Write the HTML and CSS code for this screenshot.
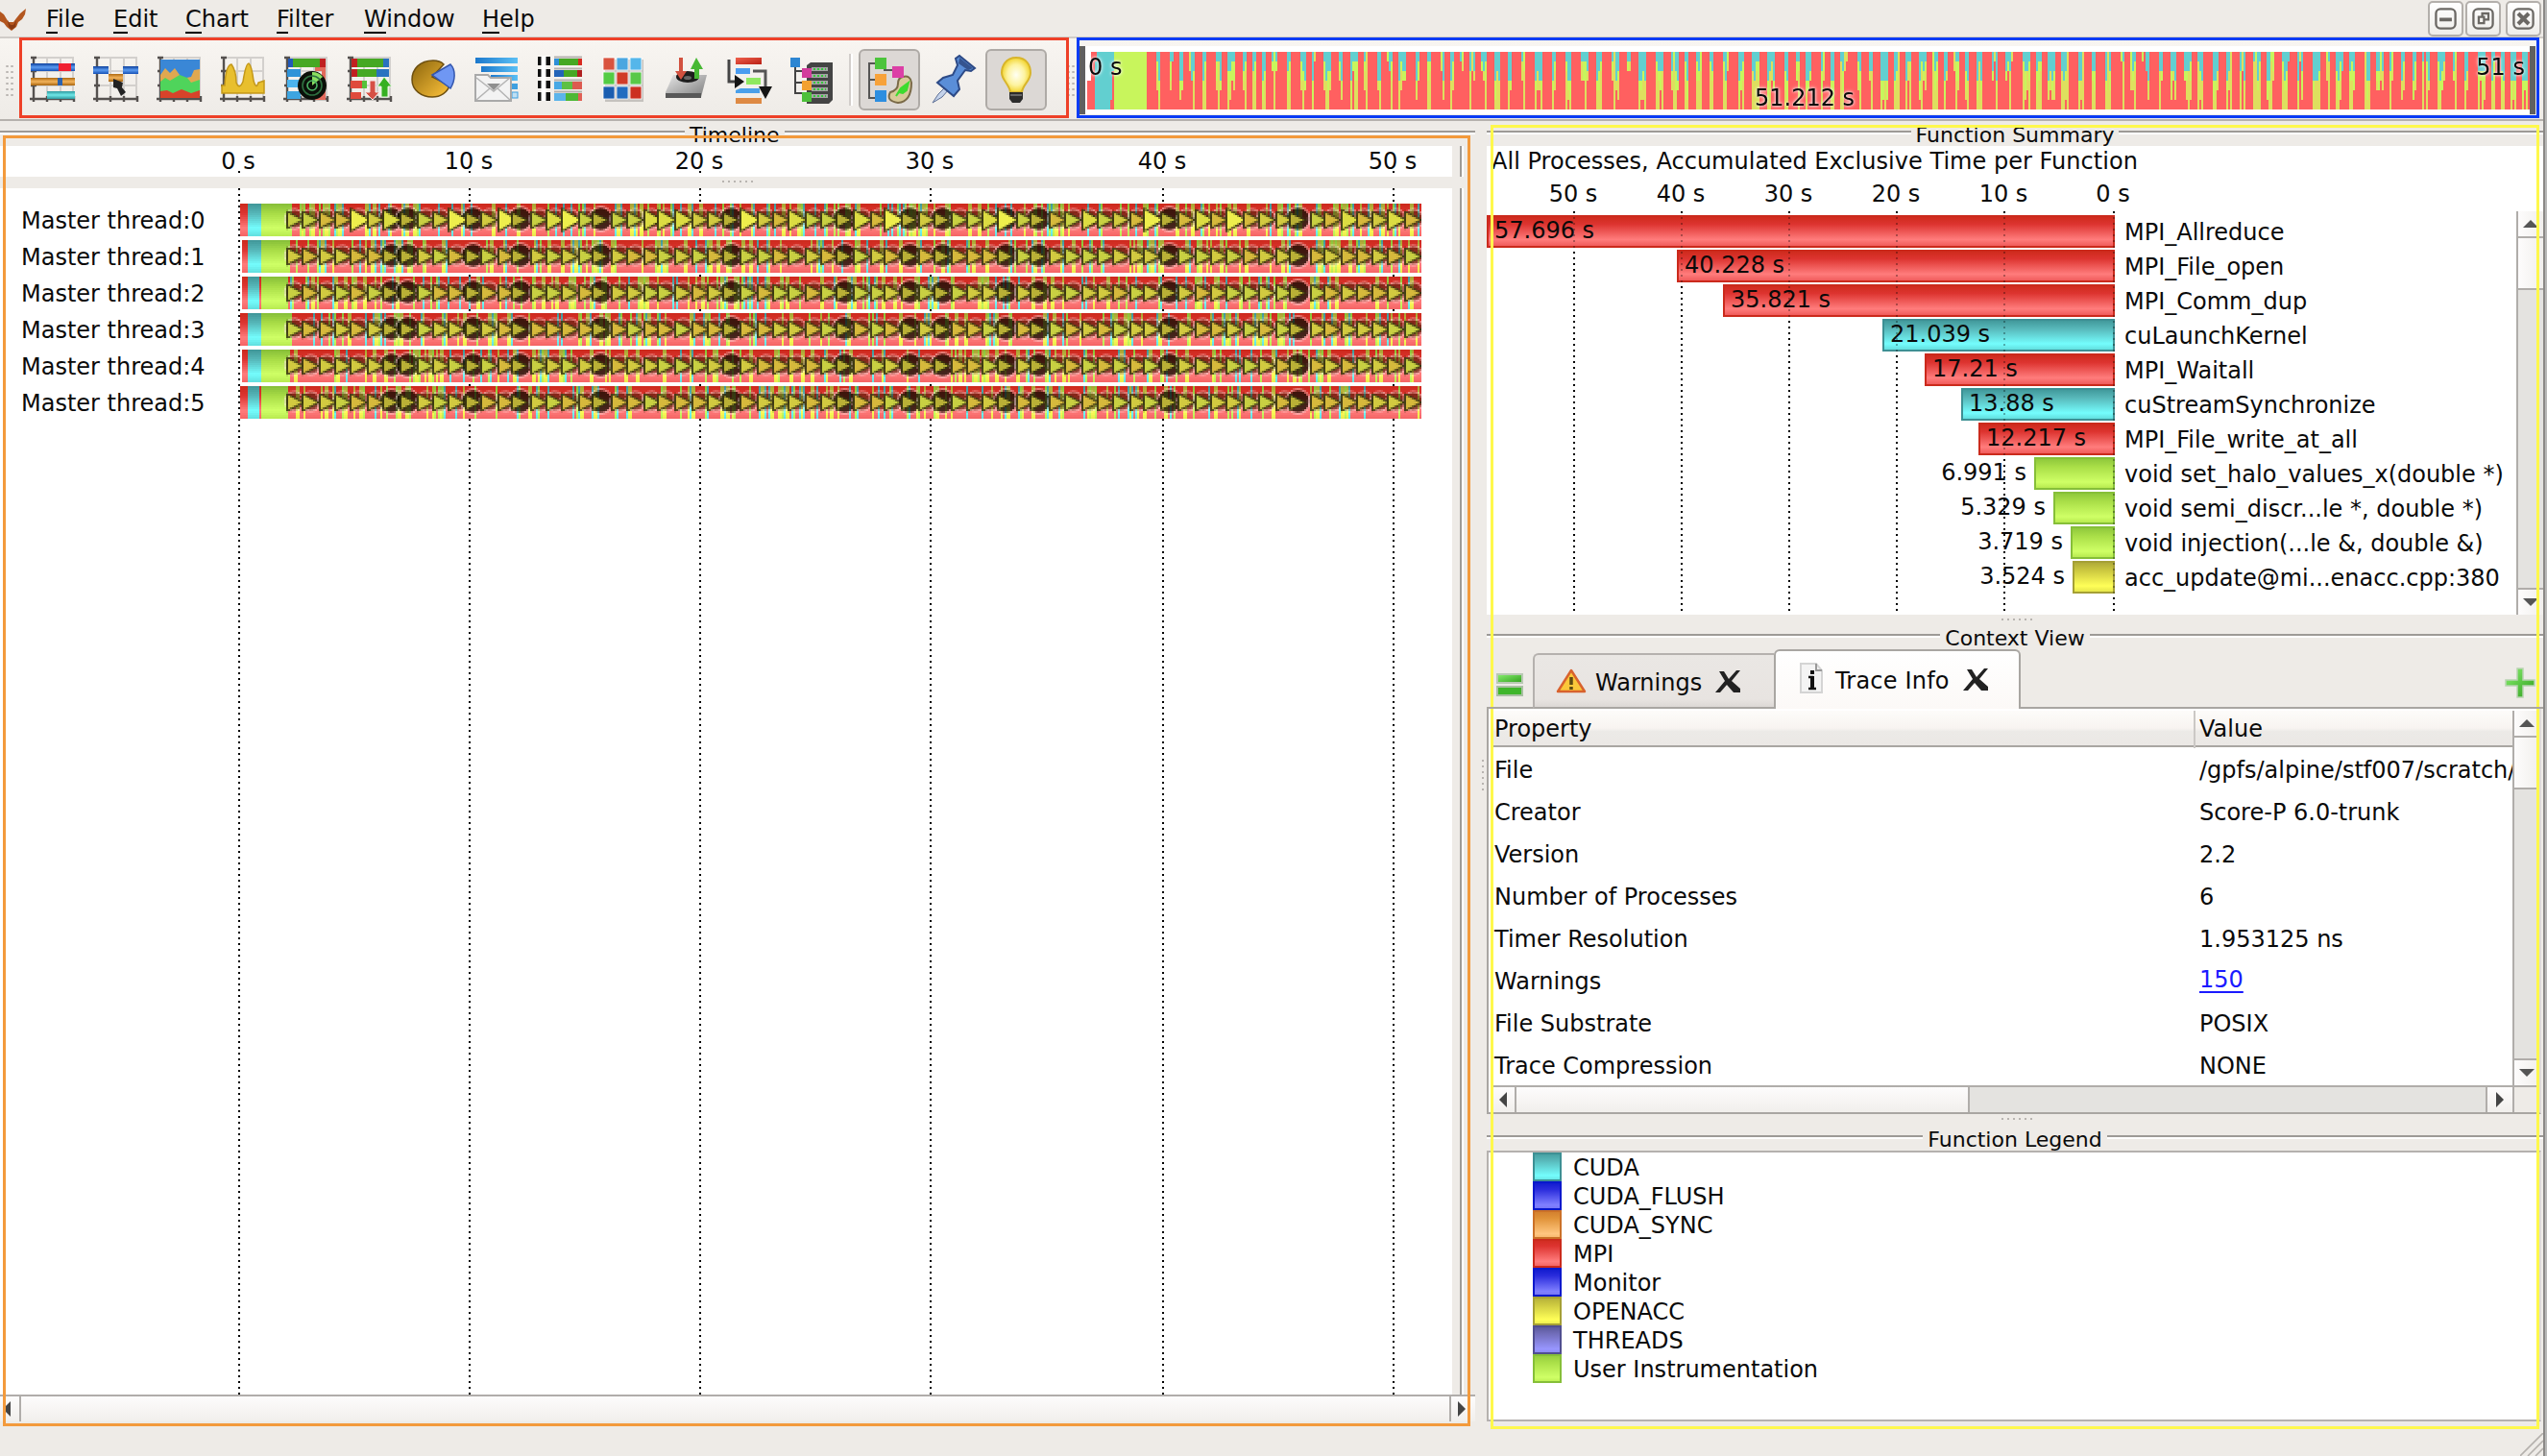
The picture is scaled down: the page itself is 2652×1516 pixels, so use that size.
FILE: index.html
```html
<!DOCTYPE html>
<html lang="en">
<head>
<meta charset="utf-8">
<title>Trace View</title>
<link rel="stylesheet" href="styles.css">
</head>
<body>
<svg class="defs" aria-hidden="true">
  <defs>
    <linearGradient id="gBlue" x1="0" y1="0" x2="0" y2="1"><stop offset="0" stop-color="#0c3f9c"/><stop offset=".5" stop-color="#5b9bf0"/><stop offset="1" stop-color="#1550b5"/></linearGradient>
    <linearGradient id="gSky" x1="0" y1="0" x2="1" y2="0"><stop offset="0" stop-color="#1b78cc"/><stop offset="1" stop-color="#5cc0f5"/></linearGradient>
    <linearGradient id="gOr" x1="0" y1="0" x2="0" y2="1"><stop offset="0" stop-color="#b06a10"/><stop offset=".5" stop-color="#f3b45c"/><stop offset="1" stop-color="#a8640e"/></linearGradient>
    <linearGradient id="gGold" x1="0" y1="0" x2="1" y2="1"><stop offset="0" stop-color="#8a640c"/><stop offset="1" stop-color="#ffc43c"/></linearGradient>
    <linearGradient id="gTeal" x1="0" y1="0" x2="0" y2="1"><stop offset="0" stop-color="#2f9aa0"/><stop offset=".5" stop-color="#70e8e8"/><stop offset="1" stop-color="#2f9aa0"/></linearGradient>
    <linearGradient id="gGreen" x1="0" y1="0" x2="1" y2="1"><stop offset="0" stop-color="#8af070"/><stop offset="1" stop-color="#2f9e1c"/></linearGradient>
    <linearGradient id="gRed" x1="0" y1="0" x2="1" y2="1"><stop offset="0" stop-color="#f0604c"/><stop offset="1" stop-color="#b81f14"/></linearGradient>
    <linearGradient id="gGrey" x1="0" y1="0" x2="1" y2="1"><stop offset="0" stop-color="#e8e8e8"/><stop offset="1" stop-color="#7b7b7b"/></linearGradient>
    <radialGradient id="gBulb"><stop offset="0" stop-color="#fffff4"/><stop offset=".6" stop-color="#fdf3a0"/><stop offset="1" stop-color="#f2d532"/></radialGradient>
    <symbol id="axes" viewBox="0 0 48 48">
      <path d="M4 2H46M4 16H46M4 31H46M18 2V45M32 2V45M45 2V45" stroke="#d3d0cd" stroke-width="2" fill="none"/>
      <path d="M4 1V48M0 45H47M1 2H7M1 16H7M1 31H7M18 42V48M32 42V48M46 42V48" stroke="#55514f" stroke-width="2.4" fill="none"/>
    </symbol>
  </defs>
</svg>

<header class="menubar">
  <svg class="logo" viewBox="0 0 28 24"><path d="M0 4 4 7 7 12 9 15 14 15 17 11 21 6 27 1 26 7 23 12 19 15 17 20 12 24 7 20 4 16 0 14Z" fill="#b3561f"/><path d="M8 13 11 18 14 18 17 13 16 20 12 23 9 20Z" fill="#8a3a12"/></svg>
  <nav class="menu">
    <span class="m-file"><u>F</u>ile</span><span class="m-edit"><u>E</u>dit</span><span class="m-chart"><u>C</u>hart</span><span class="m-filter"><u>F</u>ilter</span><span class="m-window"><u>W</u>indow</span><span class="m-help"><u>H</u>elp</span>
  </nav>
  <div class="winbtns">
    <svg viewBox="0 0 36 36"><rect x="7" y="7" width="22" height="22" rx="5"/><path d="M11 19H25" stroke-width="4"/></svg>
    <svg viewBox="0 0 36 36"><rect x="7" y="7" width="22" height="22" rx="5"/><path d="M17 12H24V19H17Z"/><path d="M13 16H19V23H13Z" fill="#f4f2ef"/></svg>
    <svg class="close" viewBox="0 0 36 36"><rect x="7" y="7" width="22" height="22" rx="5"/><path d="M12 12 24 24M24 12 12 24" stroke-width="4.5"/></svg>
  </div>
</header>

<section class="toolbar">
  <div class="handle"></div>
  <div class="tools">
    <div class="tool"><svg viewBox="0 0 48 48"><use href="#axes"/><rect x="1" y="8" width="46" height="8" fill="url(#gBlue)"/><rect x="30" y="8" width="13" height="8" fill="#f02030"/><rect x="1" y="23" width="46" height="8" fill="url(#gOr)"/><rect x="29" y="23" width="5" height="8" fill="#2b62b0"/><rect x="18" y="37" width="29" height="8" fill="url(#gTeal)"/></svg></div>
    <div class="tool"><svg viewBox="0 0 48 48"><use href="#axes"/><rect x="0" y="11" width="16" height="8" fill="url(#gBlue)"/><rect x="31" y="11" width="16" height="8" fill="url(#gBlue)"/><rect x="16" y="19" width="15" height="8" fill="url(#gOr)"/><path d="M21 24 31 28 30 33 34 38 29 42 25 34 21 33Z" fill="#222"/></svg></div>
    <div class="tool"><svg viewBox="0 0 48 48"><use href="#axes"/><rect x="4" y="4" width="41" height="40" fill="#3a87d6"/><path d="M4 20 9 13 14 18 19 13 24 20 26 24 36 22 39 15 45 14V30H4Z" fill="#e0a850"/><path d="M4 27 9 23 14 26 24 20 32 23 36 28 45 25V44H4Z" fill="#4fd45b"/><path d="M4 37 11 36 17 39 26 35 36 39 45 36V44H4Z" fill="#d8432a"/></svg></div>
    <div class="tool"><svg viewBox="0 0 48 48"><use href="#axes"/><path d="M2 39V31H5Q6 10 12 9Q17 16 17 28 20 36 24 27Q27 8 30 8 33 10 35 26 38 36 40 28L46 26V39Z" fill="#e8bf2e" stroke="#c3981a" stroke-width="1.5"/></svg></div>
    <div class="tool"><svg viewBox="0 0 48 48"><use href="#axes"/><rect x="5" y="3" width="39" height="9" fill="#46a824"/><rect x="5" y="3" width="5" height="9" fill="#2159b8"/><rect x="38" y="3" width="6" height="9" fill="#c02020"/><rect x="4" y="14" width="14" height="8" fill="#2f93d8"/><rect x="4" y="25" width="12" height="8" fill="#4cb4ee"/><rect x="4" y="37" width="14" height="8" fill="#3ea5e0"/><path d="M33 14H42V44H33" fill="none" stroke="#e36a5c" stroke-width="4"/><circle cx="30" cy="31" r="15" fill="#0b1009"/><path d="M30 31 30 17A14 14 0 0 1 41 22Z" fill="#8ade60"/><circle cx="30" cy="31" r="10" fill="none" stroke="#2e7040" stroke-width="1.6"/><circle cx="30" cy="31" r="5" fill="none" stroke="#4bb365" stroke-width="1.6"/></svg></div>
    <div class="tool"><svg viewBox="0 0 48 48"><use href="#axes"/><rect x="5" y="3" width="39" height="9" fill="#46a824"/><rect x="5" y="3" width="6" height="9" fill="#c02020"/><rect x="38" y="3" width="6" height="9" fill="#2a72c0"/><rect x="5" y="14" width="39" height="8" fill="#46a824"/><rect x="5" y="14" width="6" height="8" fill="#c02020"/><rect x="31" y="14" width="13" height="8" fill="#2a72c0"/><rect x="4" y="26" width="12" height="8" fill="#df4a3c"/><rect x="16" y="26" width="5" height="8" fill="#57c23a"/><rect x="4" y="38" width="11" height="7" fill="#df4a3c"/><path d="M24 26H30V38H34L27 46 19 38H24Z" fill="#d65045" stroke="#f5e6e3" stroke-width="1"/><path d="M36 43V32H32L39 22 47 32H43V43Z" fill="#36b022" stroke="#e8f5e3" stroke-width="1"/></svg></div>
    <div class="tool"><svg viewBox="0 0 48 48"><path d="M24 5C10 5 2 14 2 25S12 43 23 43C32 43 39 38 41 31L23 22 35 9C32 6 28 5 24 5Z" fill="url(#gGold)" stroke="#6e5010" stroke-width="1.5"/><path d="M23 20 42 9C48 15 47 26 42 34Z" fill="#6f97f3" stroke="#3457ae" stroke-width="1.5"/></svg></div>
    <div class="tool"><svg viewBox="0 0 48 48"><rect x="2" y="2" width="44" height="6" fill="url(#gSky)"/><rect x="8" y="11" width="38" height="6" fill="url(#gSky)"/><rect x="18" y="20" width="28" height="6" fill="url(#gSky)"/><rect x="40" y="29" width="6" height="6" fill="#3fa0e0"/><rect x="40" y="38" width="6" height="6" fill="#bfe0f4" stroke="#3fa0e0"/><path d="M2 20H15L18 23H39V47H2Z" fill="#f3f3f3" stroke="#a9a9a9" stroke-width="2"/><path d="M3 23 21 37 38 23M3 46 17 34M38 46 25 34" fill="none" stroke="#b4b4b4" stroke-width="1.5"/><path d="M14 29H28L21 36Z" fill="#8f8f8f"/></svg></div>
    <div class="tool"><svg viewBox="0 0 48 48"><g fill="#111"><path d="M1 1H14V10H1ZM1 14H14V22H1ZM1 26H14V34H1ZM1 38H14V47H1Z"/></g><path d="M7 0V47" stroke="#fff" stroke-width="5"/><rect x="18" y="3" width="29" height="7" fill="#46a824"/><rect x="18" y="3" width="5" height="7" fill="#2f8fd8"/><rect x="43" y="3" width="4" height="7" fill="#d82a20"/><rect x="18" y="15" width="29" height="7" fill="#46a824"/><rect x="18" y="15" width="10" height="7" fill="#2364b8"/><rect x="42" y="15" width="5" height="7" fill="#b02020"/><rect x="18" y="27" width="29" height="8" fill="#5dc044"/><rect x="18" y="27" width="8" height="8" fill="#48a8e4"/><rect x="37" y="27" width="10" height="8" fill="#dc5a50"/><rect x="18" y="39" width="29" height="8" fill="#4db835"/><rect x="18" y="39" width="12" height="8" fill="#5cb4ea"/><rect x="43" y="39" width="4" height="8" fill="#e06055"/><path d="M18 1.5H47M18 13.5H47M18 25.5H47M18 37.5H47" stroke="#b5b1ae" stroke-width="2"/></svg></div>
    <div class="tool"><svg viewBox="0 0 48 48"><rect x="5" y="4" width="40" height="44" fill="#c5c2be"/><g stroke="#fff" stroke-width=".8"><rect x="3" y="2" width="12" height="13" fill="#d9533f"/><rect x="17" y="2" width="12" height="13" fill="#4aa6e0"/><rect x="31" y="2" width="12" height="13" fill="#55b6ea"/><rect x="3" y="17" width="12" height="13" fill="#53cc44"/><rect x="17" y="17" width="12" height="13" fill="#d03c28"/><rect x="31" y="17" width="12" height="13" fill="#58c848"/><rect x="3" y="32" width="12" height="13" fill="#1a5db0"/><rect x="17" y="32" width="12" height="13" fill="#206cc0"/><rect x="31" y="32" width="12" height="13" fill="#cc3022"/></g></svg></div>
    <div class="tool"><svg viewBox="0 0 48 48"><path d="M10 20H45L39 43H2V38Z" fill="url(#gGrey)"/><path d="M2 39H39V44H2Z" fill="#585858"/><ellipse cx="25" cy="22" rx="12" ry="6" fill="#1d1d1d"/><ellipse cx="25" cy="23" rx="4" ry="2" fill="#666"/><path d="M16 2H20V16H24L18 25 12 16H16Z" fill="#d2513f"/><path d="M32 24V14H28L34 2 41 14H37V24Z" fill="#47b834"/></svg></div>
    <div class="tool"><svg viewBox="0 0 48 48"><rect x="9" y="2" width="27" height="7" fill="url(#gRed)"/><rect x="9" y="13" width="15" height="6" fill="#4a9cf0"/><rect x="20" y="23" width="15" height="7" fill="#8ee860"/><path d="M9 36 14 34H34V39H9Z" fill="#4aa0ea"/><rect x="9" y="44" width="27" height="6" fill="#de8a44"/><path d="M2 4V27H12" fill="none" stroke="#444" stroke-width="3"/><path d="M8 20 18 27 8 34Z" fill="#151515"/><path d="M27 16H40V34" fill="none" stroke="#555" stroke-width="3"/><path d="M33 32H47L40 45Z" fill="#151515"/></svg></div>
    <div class="tool"><svg viewBox="0 0 48 48"><path d="M5 8V39H16M5 16H16M5 28H16" fill="none" stroke="#444" stroke-width="2"/><path d="M17 10 21 7H44V46L40 50H17Z" fill="#444"/><path d="M22 14H39M22 21H39M22 28H39M22 35H39M22 42H39" stroke="#a5a5a5" stroke-width="4"/><path d="M24 14H37M24 21H37M24 28H37M24 35H37M24 42H37" stroke="#35c83c" stroke-width="2" stroke-dasharray="2 2"/><rect x="0" y="2" width="10" height="10" fill="#2d86d2"/><rect x="12" y="13" width="10" height="10" fill="#d23c9c"/><rect x="12" y="26" width="10" height="10" fill="#f3a130"/><rect x="12" y="38" width="10" height="10" fill="#4dc03a"/></svg></div>
    <div class="sep"></div>
    <div class="tool on"><svg viewBox="0 0 48 48"><path d="M12 7H3V43H12M3 24H12M18 14H28" fill="none" stroke="#555" stroke-width="2"/><path d="M38 21Q46 19 47 27 47 47 33 48 20 46 25 37 33 35 33 28 33 22 38 21Z" fill="#d8ca9a" stroke="#7a6a48" stroke-width="2"/><path d="M31 41 36 33 44 27 42 35 38 38 34 37Z" fill="#3ddc2e" stroke="#3ddc2e" stroke-width="2"/><rect x="9" y="1" width="12" height="12" fill="#4cc43c"/><rect x="9" y="18" width="12" height="12" fill="#f7a23a"/><rect x="9" y="35" width="12" height="12" fill="#2d8ee0"/><rect x="27" y="10" width="12" height="12" fill="#dc3fa6"/></svg></div>
    <div class="tool"><svg viewBox="0 0 48 48"><path d="M3 49 9 40 17 32 20 35 13 43Z" fill="#c4d2ea" stroke="#5d6f95" stroke-width="1"/><path d="M8 28 14 23 24 20 29 10 27 3 31 0 47 13 43 16 37 15 29 26 31 35 25 42Z" fill="#5a8ed8" stroke="#2d4a86" stroke-width="2"/><path d="M31 2 45 13 40 15 30 8Z" fill="#35548f"/></svg></div>
    <div class="tool on"><svg viewBox="0 0 48 48"><path d="M24 1C13 1 9 10 9 17S17 29 18 37H30C31 29 39 25 39 17S35 1 24 1Z" fill="url(#gBulb)" stroke="#d8b52c" stroke-width="2"/><path d="M17 37H31V44L28 48H20L17 44Z" fill="#2c2c2c"/><path d="M18 40H30" stroke="#666" stroke-width="2"/></svg></div>
  </div>
  <div class="handle right"></div>
  <div class="navigator">
    <div class="overview">
      <canvas id="overview" width="751" height="30"></canvas>
      <span class="ov start">0 s</span><span class="ov mid">51.212 s</span><span class="ov end">51 s</span>
    </div>
  </div>
</section>

<main class="main">
  <section class="left">
    <h2 class="dock"><i></i><span>Timeline</span><i></i></h2>
    <div class="axisrow">
      <div class="axis tl-cols"><span>0 s</span><span>10 s</span><span>20 s</span><span>30 s</span><span>40 s</span><span>50 s</span></div>
      <div class="gutter"></div>
    </div>
    <div class="split h12"><b></b></div>
    <div class="chartrow">
      <div class="chart">
        <div class="gridlines tl-cols"><i></i><i></i><i></i><i></i><i></i><i></i></div>
        <div class="threads">
          <ul><li>Master thread:0</li><li>Master thread:1</li><li>Master thread:2</li><li>Master thread:3</li><li>Master thread:4</li><li>Master thread:5</li></ul>
          <canvas id="timeline" width="615" height="112"></canvas>
        </div>
      </div>
      <div class="gutter"></div>
    </div>
    <div class="hscroll">
      <span class="btn"><em class="a-left"></em></span><span class="thumb"></span><span class="btn end"><em class="a-right"></em></span>
    </div>
  </section>

  <div class="vsplit"><b></b></div>

  <section class="rightcol">
    <h2 class="dock"><i></i><span>Function Summary</span><i></i></h2>
    <div class="summary">
      <p class="caption">All Processes, Accumulated Exclusive Time per Function</p>
      <div class="axis fs-cols"><span>50 s</span><span>40 s</span><span>30 s</span><span>20 s</span><span>10 s</span><span>0 s</span></div>
      <div class="plot">
        <div class="gridlines fs-cols"><i></i><i></i><i></i><i></i><i></i><i></i></div>
        <div class="bars">
          <div class="row"><div class="track"><div class="bar red" style="width:654px">57.696 s</div></div><span>MPI_Allreduce</span></div>
          <div class="row"><div class="track"><div class="bar red" style="width:456px">40.228 s</div></div><span>MPI_File_open</span></div>
          <div class="row"><div class="track"><div class="bar red" style="width:408px">35.821 s</div></div><span>MPI_Comm_dup</span></div>
          <div class="row"><div class="track"><div class="bar cyan" style="width:242px">21.039 s</div></div><span>cuLaunchKernel</span></div>
          <div class="row"><div class="track"><div class="bar red" style="width:198px">17.21 s</div></div><span>MPI_Waitall</span></div>
          <div class="row"><div class="track"><div class="bar cyan" style="width:160px">13.88 s</div></div><span>cuStreamSynchronize</span></div>
          <div class="row"><div class="track"><div class="bar red" style="width:142px">12.217 s</div></div><span>MPI_File_write_at_all</span></div>
          <div class="row"><div class="track"><small>6.991 s</small><div class="bar lime" style="width:84px"></div></div><span>void set_halo_values_x(double *)</span></div>
          <div class="row"><div class="track"><small>5.329 s</small><div class="bar lime" style="width:64px"></div></div><span>void semi_discr...le *, double *)</span></div>
          <div class="row"><div class="track"><small>3.719 s</small><div class="bar lime" style="width:46px"></div></div><span>void injection(...le &amp;, double &amp;)</span></div>
          <div class="row"><div class="track"><small>3.524 s</small><div class="bar yellow" style="width:44px"></div></div><span>acc_update@mi...enacc.cpp:380</span></div>
        </div>
        <div class="gridlines faint fs-cols"><i></i><i></i><i></i><i></i><i></i><i></i></div>
        <div class="vscroll"><span class="btn"><em class="a-up"></em></span><span class="thumb"></span><span class="trough"></span><span class="btn end"><em class="a-down"></em></span></div>
      </div>
    </div>
    <div class="split h10"><b></b></div>
    <div class="context">
      <h2 class="dock"><i></i><span>Context View</span><i></i></h2>
      <div class="tabs">
        <div class="tabpad"><svg class="eq" viewBox="0 0 28 24"><rect x="1" y="1" width="26" height="9" fill="url(#gGreen)" stroke="#b9c9b4" stroke-width="2"/><rect x="1" y="14" width="26" height="9" fill="#3fb62b" stroke="#a9bfa3" stroke-width="2"/></svg></div>
        <div class="tab"><svg class="warn" viewBox="0 0 32 26"><path d="M16 2 30 24H2Z" fill="#fbc73a" stroke="#d8622e" stroke-width="2.5" stroke-linejoin="round"/><path d="M16 9V17M16 19V22" stroke="#5d4a12" stroke-width="3.5"/></svg><span>Warnings</span><svg class="x" viewBox="0 0 28 26"><path d="M4 2H9L14 10 22 1H26L17 12 26 20V24H19L12 16 5 24H0L10 12Z" fill="#222"/></svg></div>
        <div class="tab active"><svg class="info" viewBox="0 0 24 32"><path d="M1 1H17L23 8V31H1Z" fill="#f4f4f4" stroke="#d4d4d4" stroke-width="2"/><path d="M17 1V8H23" fill="none" stroke="#999" stroke-width="2"/><path d="M9 15H13V26M9 27H17" stroke="#111" stroke-width="2.5" fill="none"/><path d="M13 14V27" stroke="#111" stroke-width="4"/><rect x="11" y="8" width="4" height="4" fill="#111"/></svg><span>Trace Info</span><svg class="x" viewBox="0 0 28 26"><path d="M4 2H9L14 10 22 1H26L17 12 26 20V24H19L12 16 5 24H0L10 12Z" fill="#222"/></svg></div>
        <div class="tabpad fill"><svg class="plus" viewBox="0 0 32 32"><path d="M13 1H19V13H31V19H19V31H13V19H1V13H13Z" fill="url(#gGreen)" stroke="#b9d4b2" stroke-width="1.5"/></svg></div>
      </div>
      <div class="tree">
        <div class="table">
          <div class="tr th"><span>Property</span><span>Value</span></div>
          <div class="tbody">
            <div class="tr"><span>File</span><span>/gpfs/alpine/stf007/scratch/</span></div>
            <div class="tr"><span>Creator</span><span>Score-P 6.0-trunk</span></div>
            <div class="tr"><span>Version</span><span>2.2</span></div>
            <div class="tr"><span>Number of Processes</span><span>6</span></div>
            <div class="tr"><span>Timer Resolution</span><span>1.953125 ns</span></div>
            <div class="tr"><span>Warnings</span><span class="link"><a>150</a></span></div>
            <div class="tr"><span>File Substrate</span><span>POSIX</span></div>
            <div class="tr"><span>Trace Compression</span><span>NONE</span></div>
          </div>
        </div>
        <div class="vscroll"><span class="btn"><em class="a-up"></em></span><span class="thumb"></span><span class="trough"></span><span class="btn end"><em class="a-down"></em></span></div>
        <div class="hscroll"><span class="btn"><em class="a-left"></em></span><span class="thumb"></span><span class="trough"></span><span class="btn end"><em class="a-right"></em></span></div>
        <div class="corner"></div>
      </div>
    </div>
    <div class="split h12"><b></b></div>
    <h2 class="dock"><i></i><span>Function Legend</span><i></i></h2>
    <ul class="legend">
      <li><i class="cyan"></i>CUDA</li>
      <li><i class="blue"></i>CUDA_FLUSH</li>
      <li><i class="orange"></i>CUDA_SYNC</li>
      <li><i class="red"></i>MPI</li>
      <li><i class="blue"></i>Monitor</li>
      <li><i class="yellow"></i>OPENACC</li>
      <li><i class="violet"></i>THREADS</li>
      <li><i class="lime"></i>User Instrumentation</li>
    </ul>
  </section>
</main>

<footer class="status"><svg viewBox="0 0 24 24"><path d="M0 24 24 0M8 24 24 8M16 24 24 16" stroke="#b5b1ad" stroke-width="1.6"/></svg></footer>

<div class="edge"></div>
<div class="frame f-red"></div>
<div class="frame f-blue"></div>
<div class="frame f-orange"></div>
<div class="frame f-yellow"></div>
<script src="charts.js"></script>
</body>
</html>
```

FILE: styles.css
```css
* { box-sizing: border-box; margin: 0; padding: 0; }
body {
  width: 2652px; height: 1516px; overflow: hidden; position: relative;
  display: flex; flex-direction: column;
  background: #eeebe7; color: #0a0a0a;
  font: 24px/32px "DejaVu Sans", sans-serif;
}
ul { list-style: none; }
i, em { font-style: normal; }
.defs { position: absolute; width: 0; height: 0; }

/* menu bar */
.menubar { height: 40px; display: flex; border-bottom: 2px solid #d0ccc8; flex: none; }
.logo { width: 28px; height: 24px; margin: 8px 20px 0 0; }
.menu { display: flex; line-height: 40px; flex: 1; }
.menu u { text-decoration: none; box-shadow: inset 0 -2px #000; padding-bottom: 1px; }
.m-file { width: 70px; } .m-edit { width: 75px; } .m-chart { width: 95px; }
.m-filter { width: 91px; } .m-window { width: 123px; }
.winbtns { display: flex; gap: 2px; padding: 1px 6px 0 0; }
.winbtns svg {
  width: 37px; height: 37px; border: 2px solid #b3afab; border-radius: 5px;
  background: linear-gradient(#fff, #efedea); fill: none; stroke: #6b6864; stroke-width: 2.5;
}
.winbtns .close { margin-left: 3px; }

/* tool bar */
.toolbar { height: 86px; flex: none; display: flex; background: linear-gradient(#f8f5f1, #eeebe7); border-bottom: 2px solid #b5b1ad; }
.handle { width: 22px; padding: 26px 0 0 5px; }
.handle::before {
  content: ""; display: block; width: 10px; height: 36px;
  background: radial-gradient(circle, #b9b5b1 1px, transparent 1.4px) 0 0 / 5px 6px;
}
.handle.right { width: 33px; padding-left: 19px; }
.tools { display: flex; align-items: center; height: 86px; }
.tool { width: 66px; height: 64px; padding: 7px 9px; flex: none; }
.tool svg { width: 48px; height: 48px; display: block; overflow: visible; }
.tool.on { width: 64px; margin: 0 1px; padding: 6px; background: #dcd8d5; border: 2px solid #aeaaa6; border-radius: 6px; }
.sep { width: 13px; height: 54px; background: linear-gradient(#fff, #fff) 6px 0 / 2px 54px no-repeat, linear-gradient(#d2cecb, #d2cecb) 4px 0 / 2px 54px no-repeat; }
.navigator { flex: 1; padding: 8px 12px 0 0; }
.overview { position: relative; height: 71px; background: #fff; border-left: 6px solid #606060; border-right: 6px solid #606060; padding: 6px 0 0 2px; }
canvas { image-rendering: pixelated; display: block; }
#overview { width: 1502px; height: 60px; }
.ov { position: absolute; line-height: 32px; padding: 0 1px; text-shadow: 0 0 3px rgba(255,255,255,.7), 0 0 3px rgba(255,255,255,.6), 0 0 5px rgba(255,255,255,.6); }
.ov.start { left: 2px; top: 6px; }
.ov.mid { left: 696px; top: 38px; }
.ov.end { right: 4px; top: 6px; }

/* docks */
.main { display: flex; height: 1354px; flex: none; }
.left { width: 1536px; display: flex; flex-direction: column; }
.rightcol { width: 1100px; }
.dock { display: flex; height: 26px; font-weight: normal; font-size: 22px; line-height: 29px; gap: 5px; flex: none; }
.dock i { flex: 1; height: 4px; margin-top: 10px; background: linear-gradient(#9d9a96 50%, #fff 50%); }
.left .dock i:first-child { flex: none; width: 713px; }
.vsplit { width: 12px; position: relative; }
.vsplit b { display: block; width: 2px; height: 32px; margin: 665px 0 0 7px; background: repeating-linear-gradient(#b8b4b0 0 2px, transparent 2px 6px); }
.split { display: flex; justify-content: center; flex: none; }
.h10 { height: 10px; padding-top: 4px; } .h12 { height: 12px; padding-top: 4px; }
.split b { width: 32px; height: 2px; margin-left: 4px; background: repeating-linear-gradient(90deg, #b8b4b0 0 2px, transparent 2px 6px); }
.left .split b { margin-left: 0; }

.axisrow { display: flex; height: 32px; }
.chartrow { display: flex; height: 1256px; }
.axisrow .axis { width: 1512px; background: #fff; }
.chart { width: 1512px; background: #fff; position: relative; }
.gutter { flex: 1; margin-left: 8px; border-left: 2px solid #9d9a96; box-shadow: inset 2px 0 #fff; }
.axis span { text-align: center; width: 80px; margin-left: -40px; position: relative; }
.axisrow .axis span::after { content: ""; position: absolute; left: 40px; bottom: 4px; width: 2px; height: 2px; background: #000; }
.tl-cols { display: grid; grid-template-columns: 240px 240px 240px 242px 240px 60px; padding-left: 248px; }
.fs-cols { display: grid; grid-template-columns: 112px 112px 112px 112px 114px 2px; padding-left: 90px; }
.gridlines { position: absolute; inset: 0; }
.gridlines i { width: 2px; height: 100%; background: repeating-linear-gradient(#000 0 2px, transparent 2px 6px); }
.gridlines.faint { opacity: .3; }
.threads { position: relative; display: flex; padding-top: 16px; }
.threads ul { width: 250px; padding-left: 22px; }
.threads li { height: 38px; line-height: 36px; }
#timeline { width: 1230px; height: 224px; }

/* scroll bars */
.hscroll, .vscroll { display: flex; background: #e4e3e0; }
.left .hscroll { height: 28px; border-top: 2px solid #b0adaa; }
.hscroll > span, .vscroll > span { display: flex; align-items: center; justify-content: center; }
.hscroll .btn, .hscroll .thumb { background: linear-gradient(#fdfcfc, #f1efec); border-right: 2px solid #b0adaa; }
.left .btn { width: 22px; } .left .thumb { flex: 1; } .hscroll .btn.end { border-right: 0; }
.left .btn.end { width: 25px; padding-right: 4px; }
.left .hscroll .btn:first-child { padding-right: 6px; }
.vscroll { flex-direction: column; border-left: 2px solid #b0adaa; }
.vscroll .btn, .vscroll .thumb { background: linear-gradient(90deg, #fdfcfc, #f1efec); border-bottom: 2px solid #b0adaa; height: 28px; flex: none; }
.vscroll .trough, .hscroll .trough { flex: 1; }
.vscroll .btn.end { border-bottom: 0; border-top: 2px solid #b0adaa; }
em { border: 0 solid transparent; width: 0; height: 0; }
.a-up { border-width: 0 8px 8px; border-bottom-color: #555; }
.a-down { border-width: 8px 8px 0; border-top-color: #555; }
.a-left { border-width: 8px 8px 8px 0; border-right-color: #444; }
.a-right { border-width: 8px 0 8px 8px; border-left-color: #444; }

/* function summary */
.summary { height: 488px; background: #fff; }
.caption { padding-left: 5px; height: 34px; white-space: nowrap; letter-spacing: .03px; }
.summary .axis { height: 34px; }
.plot { position: relative; height: 420px; padding-top: 4px; }
.bars { position: relative; }
.row { display: flex; height: 36px; line-height: 36px; white-space: pre; }
.track { width: 654px; margin-right: 10px; height: 34px; display: flex; justify-content: flex-end; }
.track small { font-size: 24px; line-height: 32px; margin-right: 8px; }
.bar { height: 34px; line-height: 28px; padding-left: 6px; border: 2px solid; background-origin: border-box; }
.red { background: linear-gradient(#cf2b1d, #dd3430 25%, #ff7c7c 78%, #f05c5c); }
.cyan { background: linear-gradient(#429a9c, #58b8ba 28%, #74fdfd 80%, #62dede); }
.lime { background: linear-gradient(#90c93c, #aadf48 28%, #cfff66 80%, #b8ea50); }
.yellow { background: linear-gradient(#b0ab38, #cdc940 28%, #ffff58 80%, #e6e64c); }
.blue { background: linear-gradient(#0c18cc, #2a2cdc 28%, #8080ff 82%, #7272f0); }
.orange { background: linear-gradient(#d07c2c, #e09238 28%, #ffc680 82%, #f4b468); }
.violet { background: linear-gradient(#565494, #706cb8 28%, #9896ff 82%, #8683ea); }
.bar.red, i.red { border-color: #cb2a1c; }
.bar.cyan, i.cyan { border-color: #3d9094; }
.bar.lime, i.lime { border-color: #86bf38; }
.bar.yellow, i.yellow { border-color: #a5a035; }
.plot .vscroll { position: absolute; right: 0; top: 0; bottom: 0; width: 28px; }
.plot .thumb { height: 54px; }

/* context view */
.context { height: 510px; }
.tabs { display: flex; height: 62px; align-items: flex-end; position: relative; z-index: 1; }
.tabpad { width: 48px; height: 62px; border-bottom: 2px solid #a9a6a2; padding: 25px 0 0 10px; }
.tabpad.fill { flex: 1; display: flex; justify-content: flex-end; padding: 19px 8px 0 0; }
.eq { width: 28px; height: 24px; display: block; }
.plus { width: 32px; height: 32px; }
.tab { width: 251px; height: 58px; border: 2px solid #b5b1ae; border-right: 0; border-bottom-color: #a9a6a2; border-radius: 6px 0 0 0; background: linear-gradient(#eae7e4, #e8e4e1 85%, #dcd8d5); display: flex; padding: 10px 0 0 20px; }
.tab span { line-height: 40px; margin-top: -1px; }
.tab.active { width: 257px; height: 62px; border: 2px solid #a9a6a2; border-bottom: 0; border-radius: 6px 6px 0 0; background: linear-gradient(#fff, #fcf9f7); padding: 12px 0 0 25px; }
.tab.active span { line-height: 40px; margin-top: -1px; letter-spacing: .2px; }
.warn { width: 34px; height: 26px; margin: 4px 8px 0 1px; }
.info { width: 24px; height: 32px; margin: 0 13px 0 0; }
.x { width: 28px; height: 26px; margin: 5px 0 0 14px; }
.active .x { margin-top: 5px; margin-left: 14px; }
.tree {
  height: 424px; margin-top: -2px; background: #fff; border: 2px solid #a9a6a2; border-right-color: #dedad7; margin-right: 2px; padding: 2px 0 0 2px;
  display: grid; grid-template: 390px 28px / 1064px 28px;
}
.table { overflow: hidden; }
.tr { display: grid; grid-template-columns: 732px 1fr; line-height: 44px; height: 44px; }
.tr span { padding-left: 4px; white-space: nowrap; }
.tr span + span { padding-left: 6px; }
.th { height: 38px; line-height: 39px; background: linear-gradient(#fdfcfa, #f8f4f1 50%, #eceae7 60%, #ebe8e5); border-bottom: 2px solid #a9a6a2; }
.tr.th span + span { border-left: 2px solid #cbc8c5; padding-left: 4px; }
.tbody { padding-top: 2px; height: 352px; }
.tr .link { line-height: 40px; }
.link a { color: #1a1aff; text-decoration: underline; text-decoration-thickness: 2px; text-underline-offset: 4px; }
.tree .vscroll .thumb { height: 54px; }
.tree .vscroll .btn { width: 26px; }
.tree .hscroll { border-top: 2px solid #b0adaa; height: 28px; }
.tree .hscroll .btn { width: 27px; }
.tree .hscroll .thumb { width: 472px; }
.tree .hscroll .btn.end { width: 28px; border-left: 2px solid #b0adaa; }
.corner { background: #eeebe7; border: solid #b0adaa; border-width: 2px 0 0 2px; height: 28px; }

/* legend */
.legend { height: 282px; margin-right: 2px; border: 2px solid #b5b1ae; border-right-color: #dedad7; background: #fff; padding-left: 46px; }
.legend li { height: 30px; line-height: 32px; display: flex; }
.legend i { width: 30px; height: 30px; border: 2px solid; margin-right: 12px; background-origin: border-box; }
i.cyan { border-color: #3d9094; } i.blue { border-color: #0818cc; }
i.orange { border-color: #cb7128; } i.violet { border-color: #504e90; }
.legend i.red { border-color: #cb2a1c; } .legend i.yellow { border-color: #a5a035; }
.legend i.lime { border-color: #86bf38; } .legend i.cyan { border-color: #3d9094; }
.legend i.blue { border-color: #0818cc; } .legend i.orange { border-color: #cb7128; }
.legend i.violet { border-color: #504e90; }

.status { flex: 1; display: flex; justify-content: flex-end; align-items: flex-end; padding-right: 4px; }
.status svg { width: 24px; height: 24px; }
.edge { position: absolute; right: 0; top: 0; width: 4px; height: 1516px; border-left: 2px solid #8b8987; background: #b9b9b8; }

/* coloured frames laid over the four window areas */
.frame { position: absolute; pointer-events: none; border: 3px solid; }
.f-red { left: 20px; top: 39px; width: 1093px; height: 84px; border-color: #ee4028; }
.f-blue { left: 1121px; top: 39px; width: 1523px; height: 84px; border-color: #0a3cf5; }
.f-orange { left: 3px; top: 141px; width: 1528px; height: 1344px; border-color: #f39a3c; }
.f-yellow { left: 1552px; top: 130px; width: 1092px; height: 1358px; border-color: #fff84c; }
```

FILE: charts.js
```javascript
// Both charts are drawn at half resolution and scaled up 2x by CSS.
let seed = 7;
const rnd = () => (seed = (seed * 16807) % 2147483647) / 2147483647;
const ri = (a, b) => a + Math.floor(rnd() * (b - a + 1));

const shades = {
  red: ['#cc291c', '#dd3430', '#ff7c7c', '#f46464'],
  cyan: ['#409698', '#56b6b8', '#74fdfd', '#62dede'],
  lime: ['#86be38', '#a8dc46', '#cfff66', '#b8ea50'],
  yellow: ['#a5a035', '#cac640', '#ffff58', '#e8e84c']
};

function drawTimeline() {
  const c = document.getElementById('timeline').getContext('2d');
  const starts = [297,314,331,347,364,382,398,415,434,449,466,483,500,517,532,552,568,584,602,616,636,652,669,684,702,720,736,752,770,788,804,820,838,854,870,888,906,920,938,956,972,990,1006,1022,1038,1057,1072,1092,1108,1125,1142,1158,1175,1190,1208,1226,1243,1260,1276,1294,1309,1328,1342,1363,1378,1396,1411,1427,1444,1462];
  const dark = new Set([398,415,483,532,616,752,870,938,972,1038,1072,1208,1342]);
  const large = new Set([364,466,517,584,770,920,1038,1190,1276]);
  const medium = new Set([398,568,669,684,702,820,888,1022,1125,1243,1396,1444]);
  for (let r = 0; r < 6; r++) {
    const y = r * 19, grad = {};
    for (const k in shades) {
      const g = c.createLinearGradient(0, y, 0, y + 17);
      [0, .3, .75, 1].forEach((s, i) => g.addColorStop(s, shades[k][i]));
      grad[k] = g;
    }
    const put = (k, x, w) => { c.fillStyle = grad[k]; c.fillRect(x, y, w, 17); };
    const x0 = (r === 0 || r === 3) || r === 5 ? 0 : 1;
    put('red', x0, 4 - x0);
    put('cyan', 4, 7);
    put('lime', 11, 16);
    if (r === 2 || r === 5) put('red', 10, 1);
    let x = [27, 26, 25, 26, 26, 25][r], last = '';
    while (x < 615) {
      const p = rnd();
      let k = p < .44 ? 'red' : p < .68 ? 'yellow' : p < .84 ? 'lime' : 'cyan';
      if (k === last) k = 'red';
      const w = k === 'red' ? ri(1, r ? 4 : 3) : k === 'yellow' ? ri(1, 2) : 1;
      put(k, x, Math.min(w, 615 - x));
      x += w; last = k;
    }
    const cy = y + 8;
    for (const s of starts) {
      const l = (s - 250) / 2, big = dark.has(s), rad = big ? 5.8 : 4.5;
      const cx = l + 4.8;
      c.beginPath(); c.arc(cx, cy, rad + .5, 0, 7);
      c.strokeStyle = 'rgba(255,230,230,.6)'; c.lineWidth = 1; c.stroke();
      c.beginPath(); c.arc(cx, cy, rad, 0, 7);
      c.fillStyle = big ? 'rgba(18,14,4,.78)' : 'rgba(50,26,4,.5)'; c.fill();
    }
    for (const s of starts) {
      const l = Math.round((s - 250) / 2) + .5;
      let w = 8.5, h = 4.4, f = ['#d2ca40', '#d6b93c', '#c8d042'][ri(0, 2)];
      if (dark.has(s)) { w = 8; h = 4; f = '#b9b036'; }
      if (!r && medium.has(s)) { w = 9.5; h = 5.4; f = '#dcdc42'; }
      if (!r && large.has(s)) { w = 10.5; h = 6; f = '#eeee4c'; }
      c.beginPath(); c.moveTo(l, cy + .5 - h); c.lineTo(l + w, cy + .5); c.lineTo(l, cy + .5 + h); c.closePath();
      c.fillStyle = f; c.fill();
      c.strokeStyle = 'rgba(46,44,12,.85)'; c.lineWidth = 1; c.stroke();
    }
  }
}

function drawOverview() {
  const c = document.getElementById('overview').getContext('2d');
  const R = '#ff6060', C = '#62cfd0', L = '#c8f55c', Y = '#dedf5e';
  const box = (f, x, y, w, h) => { c.fillStyle = f; c.fillRect(x, y, w, h); };
  box(R, 0, 15, 8, 15); box(R, 2, 0, 6, 30);
  box(C, 4, 0, 10, 30); box(R, 4, 0, 1, 5);
  box(R, 12, 25, 2, 5); box(R, 13, 10, 1, 20);
  box(L, 14, 0, 18, 30);
  let x = 31;
  while (x < 751) {
    const red = ri(3, 5);
    box(R, x, 0, red, 30); x += red;
    const n = ri(2, 4);
    for (let i = 0; i < n; i++, x++) {
      const a = rnd() < .15 ? 0 : ri(1, 3), b = a + ri(0, 2), d = rnd() < .45 ? 6 : Math.min(6, b + ri(0, 2));
      box(R, x, 0, 1, 30); box(Y, x, 0, 1, d * 5); box(L, x, 0, 1, b * 5); box(C, x, 0, 1, a * 5);
    }
  }
}

drawTimeline();
drawOverview();
```
